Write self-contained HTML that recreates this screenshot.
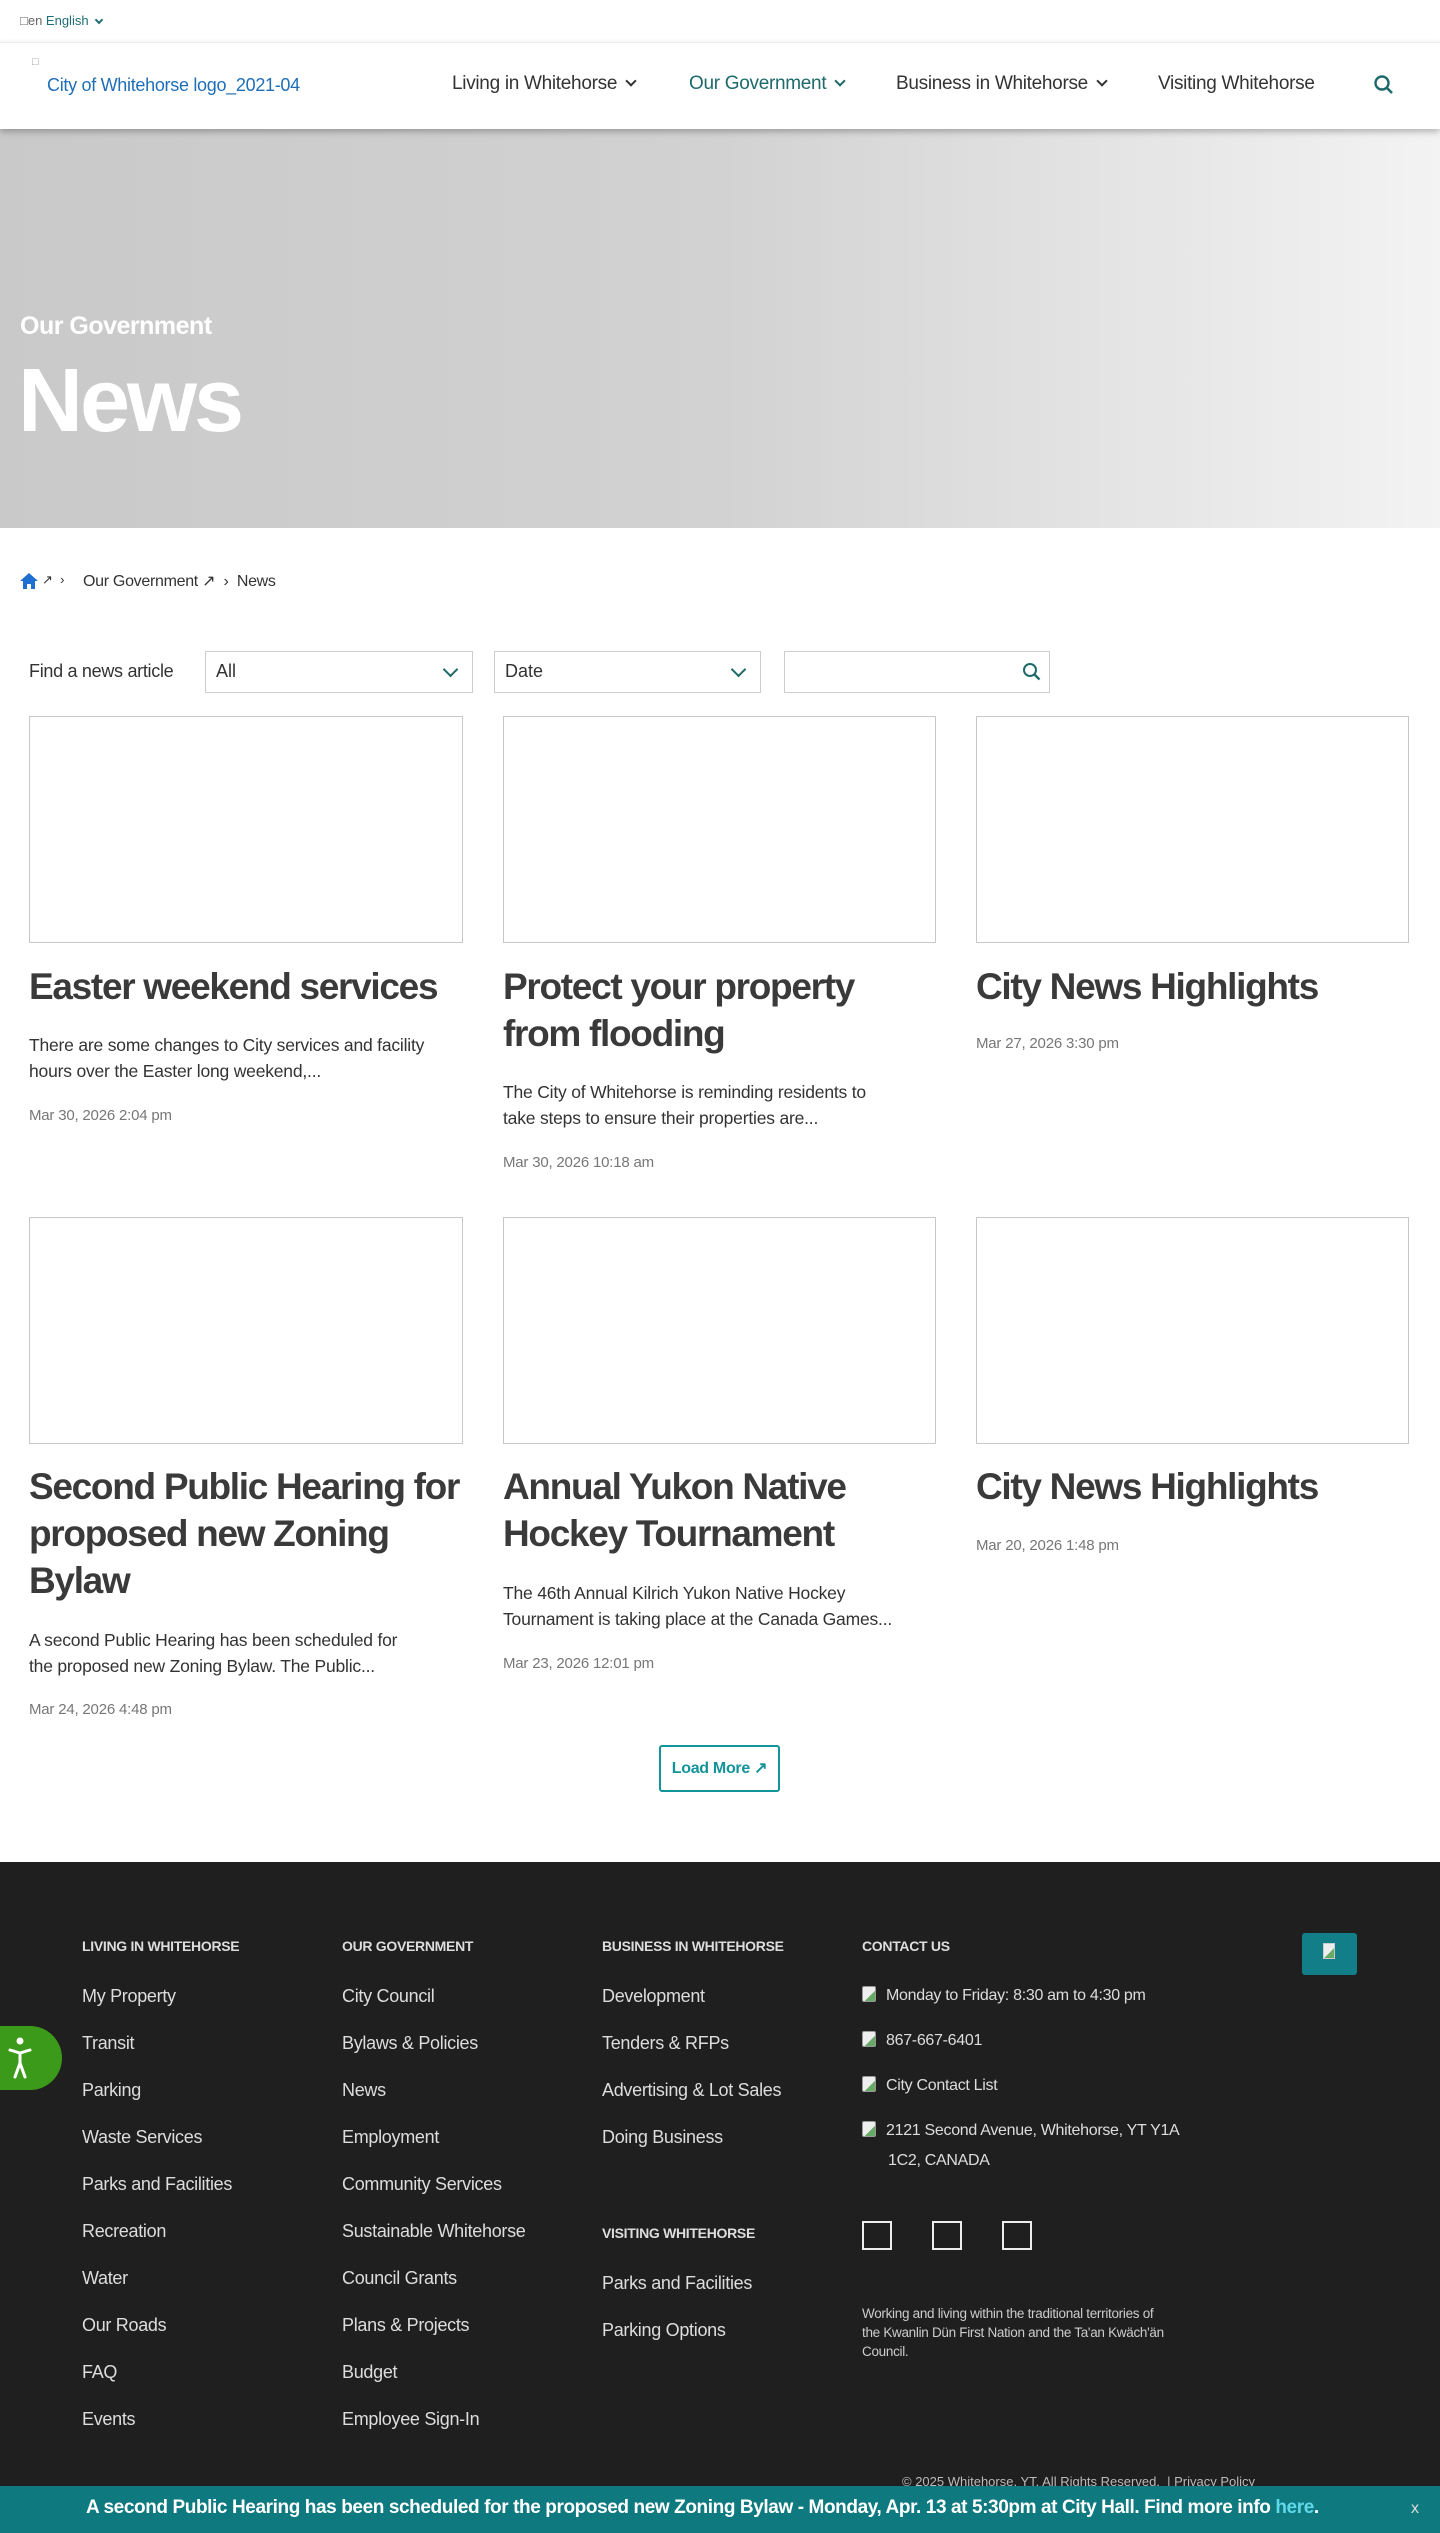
<!DOCTYPE html>
<html><head><meta charset="utf-8"><style>
*{box-sizing:border-box;margin:0;padding:0}
body{width:1440px;height:2533px;position:relative;overflow:hidden;font-family:"Liberation Sans",Arial,sans-serif;background:#fff;color:#333}
.a{position:absolute;white-space:nowrap}
.nav{font-size:19px;color:#333;letter-spacing:-.3px}
.chev{display:inline-block;width:8px;height:8px;border-right:2px solid currentColor;border-bottom:2px solid currentColor;transform:rotate(45deg);margin-left:10px;position:relative;top:-4px}
.img{position:absolute;border:1px solid #c8c8c8;background:#fff}
.t{position:absolute;font-size:37px;font-weight:bold;color:#3a3a3a;line-height:47px;letter-spacing:-1.3px;white-space:nowrap}
.d{position:absolute;font-size:17.5px;color:#333;line-height:26px;white-space:nowrap;letter-spacing:-.2px}
.dt{position:absolute;font-size:15px;color:#777;letter-spacing:-.2px}
.sel{position:absolute;border:1px solid #ccc;height:42px;font-size:18px;padding:9px 10px;color:#333}
.fh{position:absolute;font-size:14px;font-weight:bold;color:#ddd;letter-spacing:-.3px}
.fl{position:absolute;font-size:18px;color:#ddd;letter-spacing:-.3px}
.ico{display:inline-block;width:14px;height:16px;border:1px solid #999;border-radius:2px;background:linear-gradient(135deg,#eee 60%,#6a6 60%);vertical-align:-2px;margin-right:10px}
</style></head><body>
<div class="a" style="left:20px;top:13px;font-size:13px;color:#1e6e73"><span style="color:#666">&#9633;en</span> English <span class="chev" style="width:6px;height:6px;margin-left:4px;top:-2px"></span></div>
<div class="a" style="left:0;top:42px;width:1440px;height:87px;background:#fff;box-shadow:0 3px 6px rgba(0,0,0,.25);border-top:1px solid #eee"></div>
<div class="a" style="left:32px;top:56px;font-size:11px;color:#999">&#9633;</div>
<div class="a" style="left:47px;top:75px;font-size:18px;color:#1f6fb8;letter-spacing:-.3px">City of Whitehorse logo_2021-04</div>
<div class="a nav" style="left:452px;top:73px">Living in Whitehorse<span class="chev"></span></div>
<div class="a nav" style="left:689px;top:73px;color:#1e6a6a">Our Government<span class="chev"></span></div>
<div class="a nav" style="left:896px;top:73px">Business in Whitehorse<span class="chev"></span></div>
<div class="a nav" style="left:1158px;top:73px">Visiting Whitehorse</div>
<svg class="a" style="left:1373px;top:74px" width="22" height="22" viewBox="0 0 22 22"><circle cx="9" cy="9" r="6.5" fill="none" stroke="#1e6a6a" stroke-width="2.4"/><path d="M14 14l5 5" stroke="#1e6a6a" stroke-width="2.6"/></svg>
<div class="a" style="left:0;top:129px;width:1440px;height:399px;background:linear-gradient(90deg,#c9c9c9 0%,#d2d2d2 50%,#f3f3f3 100%);z-index:-1"></div>
<div class="a" style="left:20px;top:312px;font-size:25px;font-weight:bold;color:#fff;letter-spacing:-.5px">Our Government</div>
<div class="a" style="left:18px;top:350px;font-size:90px;font-weight:bold;color:#fff;letter-spacing:-3px">News</div>
<svg class="a" style="left:19px;top:572px" width="20" height="18" viewBox="0 0 20 18"><path d="M10 1L1 9h3v8h4v-5h4v5h4V9h3z" fill="#1f6fd0"/></svg>
<div class="a" style="left:42px;top:572px;font-size:13px;color:#333">&#8599; &nbsp;&#8250;</div>
<div class="a" style="left:83px;top:571px;font-size:16px;color:#333;letter-spacing:-.3px">Our Government &#8599; &nbsp;&#8250; &nbsp;News</div>
<div class="a" style="left:29px;top:661px;font-size:18px;color:#333;letter-spacing:-.3px">Find a news article</div>
<div class="sel" style="left:205px;top:651px;width:268px">All<span class="chev" style="position:absolute;right:16px;top:12px;width:11px;height:11px;color:#1e6a6a"></span></div>
<div class="sel" style="left:494px;top:651px;width:267px">Date<span class="chev" style="position:absolute;right:16px;top:12px;width:11px;height:11px;color:#1e6a6a"></span></div>
<div class="sel" style="left:784px;top:651px;width:266px"></div>
<svg class="a" style="left:1022px;top:662px" width="20" height="20" viewBox="0 0 20 20"><circle cx="8" cy="8" r="6" fill="none" stroke="#1e6a6a" stroke-width="2"/><path d="M12.5 12.5l5 5" stroke="#1e6a6a" stroke-width="2.4"/></svg>

<div class="img" style="left:29px;top:716px;width:434px;height:227px"></div>
<div class="img" style="left:503px;top:716px;width:433px;height:227px"></div>
<div class="img" style="left:976px;top:716px;width:433px;height:227px"></div>
<div class="t" style="left:29px;top:963px">Easter weekend services</div>
<div class="d" style="left:29px;top:1032px">There are some changes to City services and facility<br>hours over the Easter long weekend,...</div>
<div class="dt" style="left:29px;top:1107px">Mar 30, 2026 2:04 pm</div>
<div class="t" style="left:503px;top:963px">Protect your property<br>from flooding</div>
<div class="d" style="left:503px;top:1079px">The City of Whitehorse is reminding residents to<br>take steps to ensure their properties are...</div>
<div class="dt" style="left:503px;top:1154px">Mar 30, 2026 10:18 am</div>
<div class="t" style="left:976px;top:963px">City News Highlights</div>
<div class="dt" style="left:976px;top:1035px">Mar 27, 2026 3:30 pm</div>

<div class="img" style="left:29px;top:1217px;width:434px;height:227px"></div>
<div class="img" style="left:503px;top:1217px;width:433px;height:227px"></div>
<div class="img" style="left:976px;top:1217px;width:433px;height:227px"></div>
<div class="t" style="left:29px;top:1463px">Second Public Hearing for<br>proposed new Zoning<br>Bylaw</div>
<div class="d" style="left:29px;top:1627px">A second Public Hearing has been scheduled for<br>the proposed new Zoning Bylaw. The Public...</div>
<div class="dt" style="left:29px;top:1701px">Mar 24, 2026 4:48 pm</div>
<div class="t" style="left:503px;top:1463px">Annual Yukon Native<br>Hockey Tournament</div>
<div class="d" style="left:503px;top:1580px">The 46th Annual Kilrich Yukon Native Hockey<br>Tournament is taking place at the Canada Games...</div>
<div class="dt" style="left:503px;top:1655px">Mar 23, 2026 12:01 pm</div>
<div class="t" style="left:976px;top:1463px">City News Highlights</div>
<div class="dt" style="left:976px;top:1537px">Mar 20, 2026 1:48 pm</div>

<div class="a" style="left:659px;top:1745px;width:121px;height:47px;border:2px solid #13949a;border-radius:3px;color:#13949a;font-size:16px;font-weight:bold;text-align:center;line-height:43px;letter-spacing:-.3px">Load More &#8599;</div>

<div class="a" style="left:0;top:1862px;width:1440px;height:671px;background:#1f1f1f"></div>
<div class="a" style="left:0;top:2026px;width:62px;height:64px;background:#3c9a1a;border-radius:0 32px 32px 0"></div>
<svg class="a" style="left:8px;top:2036px" width="24" height="44" viewBox="0 0 24 44"><circle cx="12" cy="5" r="3.5" fill="#fff"/><path d="M2 14l10 3 10-3M12 17v10M12 27l-5 14M12 27l5 14" stroke="#fff" stroke-width="3" fill="none" stroke-linecap="round"/></svg>
<div class="fh" style="left:82px;top:1938px">LIVING IN WHITEHORSE</div>
<div class="fh" style="left:342px;top:1938px">OUR GOVERNMENT</div>
<div class="fh" style="left:602px;top:1938px">BUSINESS IN WHITEHORSE</div>
<div class="fh" style="left:862px;top:1938px">CONTACT US</div>
<div class="a" style="left:1302px;top:1933px;width:55px;height:42px;background:#127e88;border-radius:3px"></div>
<div class="a" style="left:1323px;top:1943px;width:12px;height:16px;border:1px solid #ccc;background:linear-gradient(135deg,#eee 60%,#6a6 60%)"></div>

<div class="fl" style="left:82px;top:1986px">My Property</div>
<div class="fl" style="left:82px;top:2033px">Transit</div>
<div class="fl" style="left:82px;top:2080px">Parking</div>
<div class="fl" style="left:82px;top:2127px">Waste Services</div>
<div class="fl" style="left:82px;top:2174px">Parks and Facilities</div>
<div class="fl" style="left:82px;top:2221px">Recreation</div>
<div class="fl" style="left:82px;top:2268px">Water</div>
<div class="fl" style="left:82px;top:2315px">Our Roads</div>
<div class="fl" style="left:82px;top:2362px">FAQ</div>
<div class="fl" style="left:82px;top:2409px">Events</div>

<div class="fl" style="left:342px;top:1986px">City Council</div>
<div class="fl" style="left:342px;top:2033px">Bylaws &amp; Policies</div>
<div class="fl" style="left:342px;top:2080px">News</div>
<div class="fl" style="left:342px;top:2127px">Employment</div>
<div class="fl" style="left:342px;top:2174px">Community Services</div>
<div class="fl" style="left:342px;top:2221px">Sustainable Whitehorse</div>
<div class="fl" style="left:342px;top:2268px">Council Grants</div>
<div class="fl" style="left:342px;top:2315px">Plans &amp; Projects</div>
<div class="fl" style="left:342px;top:2362px">Budget</div>
<div class="fl" style="left:342px;top:2409px">Employee Sign-In</div>

<div class="fl" style="left:602px;top:1986px">Development</div>
<div class="fl" style="left:602px;top:2033px">Tenders &amp; RFPs</div>
<div class="fl" style="left:602px;top:2080px">Advertising &amp; Lot Sales</div>
<div class="fl" style="left:602px;top:2127px">Doing Business</div>
<div class="fh" style="left:602px;top:2225px">VISITING WHITEHORSE</div>
<div class="fl" style="left:602px;top:2273px">Parks and Facilities</div>
<div class="fl" style="left:602px;top:2320px">Parking Options</div>

<div class="fl" style="left:862px;top:1986px;font-size:16px"><span class="ico"></span>Monday to Friday: 8:30 am to 4:30 pm</div>
<div class="fl" style="left:862px;top:2031px;font-size:16px"><span class="ico"></span>867-667-6401</div>
<div class="fl" style="left:862px;top:2076px;font-size:16px"><span class="ico"></span>City Contact List</div>
<div class="fl" style="left:862px;top:2116px;font-size:16px;line-height:30px"><span class="ico"></span>2121 Second Avenue, Whitehorse, YT Y1A<br><span style="padding-left:26px">1C2, CANADA</span></div>
<div class="a" style="left:862px;top:2221px;width:30px;height:29px;border:2px solid #eee"></div>
<div class="a" style="left:932px;top:2221px;width:30px;height:29px;border:2px solid #eee"></div>
<div class="a" style="left:1002px;top:2221px;width:30px;height:29px;border:2px solid #eee"></div>
<div class="a" style="left:862px;top:2304px;font-size:13.5px;line-height:19px;color:#ccc;letter-spacing:-.3px">Working and living within the traditional territories of<br>the Kwanlin Dün First Nation and the Ta'an Kwäch'än<br>Council.</div>
<div class="a" style="left:902px;top:2474px;font-size:13px;color:#bbb">© 2025 Whitehorse, YT. All Rights Reserved. &nbsp;| Privacy Policy</div>

<div class="a" style="left:0;top:2486px;width:1440px;height:47px;background:#0f7980"></div>
<div class="a" style="left:86px;top:2497px;font-size:19px;font-weight:bold;color:#fff;letter-spacing:-.4px">A second Public Hearing has been scheduled for the proposed new Zoning Bylaw - Monday, Apr. 13 at 5:30pm at City Hall. Find more info <span style="color:#5fd8e8">here</span>.</div>
<div class="a" style="left:1411px;top:2500px;font-size:16px;color:#ddd">x</div>
</body></html>
